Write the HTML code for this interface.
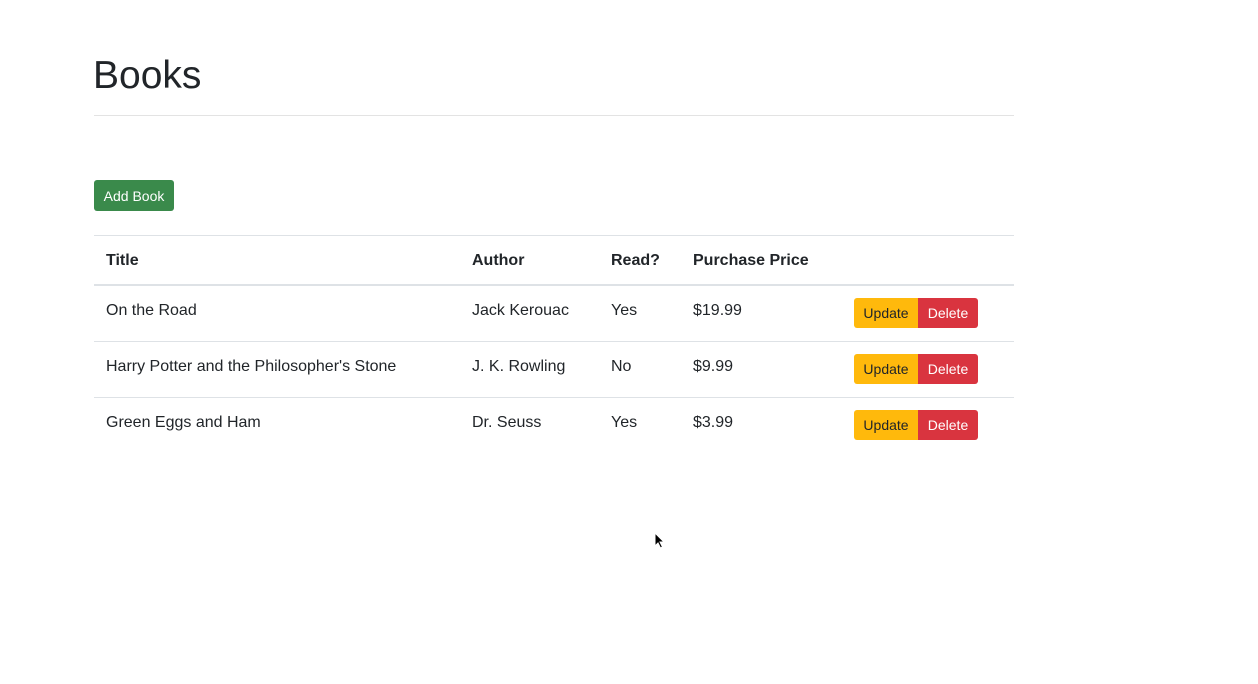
<!DOCTYPE html>
<html><head><meta charset="utf-8"><style>
body{margin:0;width:1258px;height:684px;background:#fff;font-family:"Liberation Sans",sans-serif;color:#212529;position:relative;overflow:hidden}
.a{position:absolute;white-space:nowrap}
h1{position:absolute;left:93px;top:52px;margin:0;font-size:39px;font-weight:400;line-height:48px}
.hr{position:absolute;left:94px;width:920px;height:1px;background:#e3e3e3}
.btn{position:absolute;font-size:14px;line-height:31px;text-align:center}
.t{font-size:16px;line-height:20px}
</style></head><body>
<h1>Books</h1>
<div class="hr" style="top:115px"></div>
<div class="btn" style="left:94px;top:180px;width:80px;height:31px;background:#3a8a4b;color:#fff;border-radius:3px;line-height:32px">Add Book</div>
<div class="hr" style="top:235px;background:#dee2e6"></div>
<div class="hr" style="top:284px;height:2px;background:#dee2e6"></div>
<div class="hr" style="top:341px;background:#dee2e6"></div>
<div class="hr" style="top:397px;background:#dee2e6"></div>
<div class="a t" style="left:106px;top:251px;font-weight:bold">Title</div>
<div class="a t" style="left:472px;top:251px;font-weight:bold">Author</div>
<div class="a t" style="left:611px;top:251px;font-weight:bold">Read?</div>
<div class="a t" style="left:693px;top:251px;font-weight:bold">Purchase Price</div>

<div class="a t" style="left:106px;top:301px">On the Road</div>
<div class="a t" style="left:472px;top:301px">Jack Kerouac</div>
<div class="a t" style="left:611px;top:301px">Yes</div>
<div class="a t" style="left:693px;top:301px">$19.99</div>

<div class="a t" style="left:106px;top:357px">Harry Potter and the Philosopher's Stone</div>
<div class="a t" style="left:472px;top:357px">J. K. Rowling</div>
<div class="a t" style="left:611px;top:357px">No</div>
<div class="a t" style="left:693px;top:357px">$9.99</div>

<div class="a t" style="left:106px;top:413px">Green Eggs and Ham</div>
<div class="a t" style="left:472px;top:413px">Dr. Seuss</div>
<div class="a t" style="left:611px;top:413px">Yes</div>
<div class="a t" style="left:693px;top:413px">$3.99</div>

<div class="btn" style="left:854px;top:298px;width:64px;height:30px;background:#ffb90c;border-radius:3px 0 0 3px">Update</div>
<div class="btn" style="left:918px;top:298px;width:60px;height:30px;background:#d9343f;color:#fff;border-radius:0 3px 3px 0">Delete</div>
<div class="btn" style="left:854px;top:354px;width:64px;height:30px;background:#ffb90c;border-radius:3px 0 0 3px">Update</div>
<div class="btn" style="left:918px;top:354px;width:60px;height:30px;background:#d9343f;color:#fff;border-radius:0 3px 3px 0">Delete</div>
<div class="btn" style="left:854px;top:410px;width:64px;height:30px;background:#ffb90c;border-radius:3px 0 0 3px">Update</div>
<div class="btn" style="left:918px;top:410px;width:60px;height:30px;background:#d9343f;color:#fff;border-radius:0 3px 3px 0">Delete</div>

<svg class="a" style="left:654px;top:532px" width="12" height="18" viewBox="0 0 12 18"><path d="M1 1 L1 14 L4 11 L6.5 16 L8.5 15 L6 10 L10 10 Z" fill="#000" stroke="#fff" stroke-width="1"/></svg>
</body></html>
